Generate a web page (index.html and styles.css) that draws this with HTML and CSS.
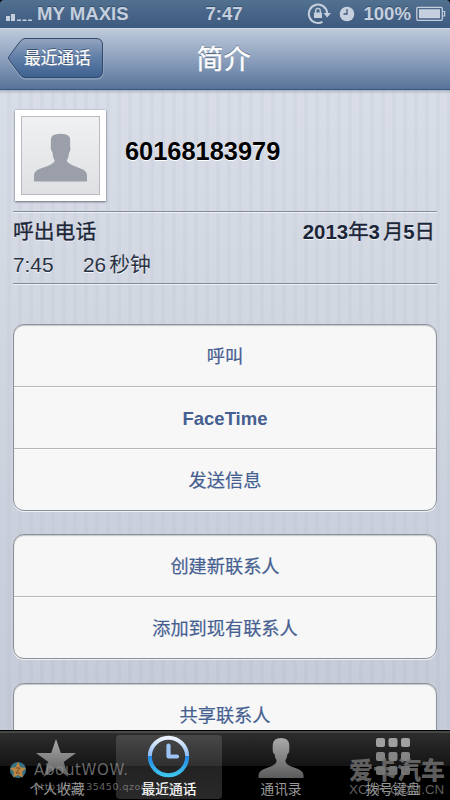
FILE: index.html
```html
<!DOCTYPE html>
<html lang="zh-CN">
<head>
<meta charset="utf-8">
<title>简介</title>
<link rel="stylesheet" href="styles.css">
</head>
<body>
<div class="phone">
  <header class="status">
    <div class="carrier">
      <svg width="28" height="10" viewBox="0 0 28 10" fill="#c5cfdd"><path d="M1 4h4v5H1zM6 2h4v7H6zM12 7.5h4V9h-4zM17.500 7.500h4V9h-4zM23 7.500h4V9h-4z"/></svg>
      <span class="carrier-name">MY MAXIS</span>
    </div>
    <span class="clock">7:47</span>
    <div class="indicators">
      <svg class="rotation" width="24" height="22" viewBox="0 0 24 22"><path d="M15.500 18.800A9.200 9.200 0 1 1 20.200 10" fill="none" stroke="#c5cfdd" stroke-width="2"/><path d="M16.500 10h7.500l-3.800 4.500zM7 9.500h8V15H7z" fill="#c5cfdd"/><path d="M8.700 10V7.700a2.300 2.300 0 0 1 4.600 0V10" fill="none" stroke="#c5cfdd" stroke-width="1.300"/></svg>
      <svg class="alarm" width="16" height="16" viewBox="0 0 16 16"><circle cx="8" cy="8" r="7.300" fill="#c5cfdd"/><path d="M8 3v5H4.500" fill="none" stroke="#3e5c80" stroke-width="1.300"/></svg>
      <span class="percent">100%</span>
      <svg width="31" height="16" viewBox="0 0 31 16"><rect x="1.800" y="1.300" width="25.500" height="13" rx="1" fill="none" stroke="#c5cfdd" stroke-width="1.300"/><path d="M4 3.300h21v9H4z" fill="#c5cfdd"/><path d="M28 5.500h1.600v4.500H28" fill="none" stroke="#c5cfdd" stroke-width="1.200"/></svg>
    </div>
  </header>
  <nav class="navbar">
    <a class="back">
      <svg class="back-shape" width="98" height="44" viewBox="0 0 98 44"><defs><linearGradient id="back" x2="0" y2="1"><stop stop-color="#94a5bf"/><stop offset=".5" stop-color="#5f7da7"/><stop offset="1" stop-color="#3d608f"/></linearGradient></defs><path d="M18 2.500H89Q96 2.500 96 9V34.500Q96 41 89 41H18Q15 41 13 38L2 23Q1 21.500 2 20L13 5.500Q15.500 2.500 18 2.500Z" fill="none" stroke="#a9bacf" stroke-opacity=".7" transform="translate(0 1)"/><path d="M18 1.500H89Q95.500 1.500 95.500 8V34Q95.500 40.500 89 40.500H18Q15 40.500 13 37.500L2 22.500Q1 21 2 19.500L13 4.500Q15.500 1.500 18 1.500Z" fill="url(#back)" stroke="#34496a"/></svg>
      <span class="back-label">最近通话</span>
    </a>
    <h1 class="title">简介</h1>
  </nav>
  <main class="content">
    <section class="contact">
      <div class="photo"><svg width="80" height="80" viewBox="0 0 80 80"><path d="M12.500 67V60Q13 56 18 54L28 50.500Q33 48 34 45.500L32.500 42L31.500 36Q29.500 35 30 29V24Q29.500 17.500 40 17.500Q51 17.500 50 25V30Q51 35 49 36.500L48 42L46.500 45.500Q47.500 48 53 50.500L62 54Q67 56 67.500 60V67Z" fill="#9b9fa9"/></svg></div>
      <strong class="number">60168183979</strong>
    </section>
    <section class="call">
      <div class="call-row"><span class="call-kind">呼出电话</span><b class="date">2013<span class="cjk">年</span>3<i class="thin"></i><span class="cjk">月</span>5<span class="cjk">日</span></b></div>
      <div class="call-row second"><span class="call-time">7:45</span><span>26<i class="thin"></i>秒钟</span></div>
    </section>
    <ul class="group">
      <li>呼叫</li>
      <li><b class="latin">FaceTime</b></li>
      <li>发送信息</li>
    </ul>
    <ul class="group">
      <li>创建新联系人</li>
      <li>添加到现有联系人</li>
    </ul>
    <ul class="group">
      <li>共享联系人</li>
    </ul>
  </main>
  <footer class="tabs">
    <a class="tab"><svg width="48" height="44" viewBox="0 0 48 44"><defs><linearGradient id="grey" x2="0" y2="1"><stop stop-color="#aaa"/><stop offset="1" stop-color="#5c5c5c"/></linearGradient></defs><path d="M23 4L27.800 18H43L30.700 27L35.400 42L23 33L10.600 42L15.300 27L3 18H18.200Z" fill="url(#grey)"/></svg><span>个人收藏</span></a>
    <a class="tab active"><svg width="48" height="44" viewBox="0 0 48 44"><defs><linearGradient id="blue" x2="0" y2="1"><stop stop-color="#edf4ff"/><stop offset=".48" stop-color="#8dbaf4"/><stop offset=".5" stop-color="#2487e6"/><stop offset="1" stop-color="#3fc4ee"/></linearGradient></defs><circle cx="23.500" cy="21.500" r="18.700" fill="none" stroke="url(#blue)" stroke-width="4"/><path d="M23.500 10.500V21.500H32" fill="none" stroke="#9dc3f5" stroke-width="4.200" stroke-linecap="round" stroke-linejoin="round"/></svg><span>最近通话</span></a>
    <a class="tab"><svg width="48" height="44" viewBox="0 0 48 44"><path d="M1.500 43V40Q2 36 7 34L15 31Q20 29 19.500 25Q18 23 17.500 19Q15.500 18 15.700 13V10Q16 3 24 3Q32 3 32.300 10V13Q32.500 18 30.500 19Q30 23 28.500 25Q28 29 33 31L41 34Q46 36 46.500 40V43Z" fill="url(#grey)"/></svg><span>通讯录</span></a>
    <a class="tab"><svg width="48" height="44" viewBox="0 0 48 44"><g fill="#a0a0a0"><rect x="7" y="3" width="9" height="9" rx="2"/><rect x="19.500" y="3" width="9" height="9" rx="2"/><rect x="32" y="3" width="9" height="9" rx="2"/></g><g fill="#858585"><rect x="7" y="17" width="9" height="9" rx="2"/><rect x="19.500" y="17" width="9" height="9" rx="2"/><rect x="32" y="17" width="9" height="9" rx="2"/></g><g fill="#707070"><rect x="7" y="31" width="9" height="9" rx="2"/><rect x="19.500" y="31" width="9" height="9" rx="2"/><rect x="32" y="31" width="9" height="9" rx="2"/></g></svg><span>拨号键盘</span></a>
    <div class="mark-left">
      <svg width="18" height="18" viewBox="0 0 18 18"><circle cx="9" cy="9" r="8" fill="#376f83"/><path d="M9 1L11.400 6.200L17 7L13 11L14 16.500L9 14L4 16.500L5 11L1 7L6.600 6.200Z" fill="#bb8743"/><path d="M7 7h4l-4 5h4" fill="none" stroke="#7a4b2c"/></svg>
      <span class="mark-name">AboutWOW.</span>
      <span class="mark-url">http://17135450.qzone.com</span>
    </div>
    <div class="mark-right"><span class="mark-brand">爱卡汽车</span><span class="mark-domain">XCAR.COM.CN</span></div>
  </footer>
</div>
</body>
</html>
```
FILE: styles.css
```css
* { box-sizing: border-box; }
body { margin: 0; background: #000; font-family: "Liberation Sans", "Noto Sans CJK SC", sans-serif; }
svg { display: block; flex: none; }
.phone { width: 450px; height: 800px; overflow: hidden; display: flex; flex-direction: column; border-radius: 4px 4px 0 0; }

.status { height: 28px; flex: none; display: grid; grid-template-columns: 1fr auto 1fr; align-items: center; padding: 0 4px 0 5px; background: linear-gradient(#52708f, #3d5a80); color: #c5cfdd; font-weight: bold; font-size: 18.600px; line-height: 28px; text-shadow: 0 -1px 0 #34506f; }
.carrier { display: flex; align-items: center; gap: 4px; }
.carrier svg { margin-top: 6px; }
.clock { margin-right: 3px; }
.indicators { display: flex; align-items: center; justify-content: flex-end; }
.rotation { margin-right: 8px; }
.alarm { margin-right: 8px; }
.percent { margin-right: 4px; }

.navbar { position: relative; height: 62px; flex: none; display: flex; align-items: center; justify-content: center; background: linear-gradient(#bdcadb, #8ca0bd 50%, #58749a); border-top: 1px solid #d0dae6; border-bottom: 1px solid #385480; }
.back { position: absolute; left: 7px; top: 8px; width: 98px; height: 44px; }
.back-shape { position: absolute; left: 0; top: 0; }
.back-label { position: absolute; left: 17px; top: 1px; line-height: 41px; font-size: 16.700px; color: #fff; white-space: nowrap; -webkit-text-stroke: .2px #fff; text-shadow: 0 -1px 0 #3c4f6c; }
.title { margin: 2px 3px 0 0; font-size: 27px; line-height: 58px; font-weight: 400; color: #fff; -webkit-text-stroke: .4px #fff; text-shadow: 0 -1px 0 #4c5d77; }

.content { flex: 1; min-height: 0; overflow: hidden; padding: 20px 13px 0; background: repeating-linear-gradient(90deg, rgba(100,120,150,0) 0 7px, rgba(100,120,150,.045) 7px 11px), linear-gradient(#aeb6c4, rgba(174,182,196,0) 4px), linear-gradient(#d8dde7, #c5cbd7); }
.contact { display: flex; height: 101px; }
.photo { width: 91px; height: 91px; margin-left: 2px; padding: 6px; background: #fff; box-shadow: 0 1px 2px rgba(60,65,80,.65), 0 0 1px #8b91a0; }
.photo svg { width: 79px; height: 79px; border: 1px solid #b9bbc0; background: linear-gradient(#f0f1f2, #dfe0e3); }
.number { margin-left: 19px; line-height: 83px; font-size: 25.400px; color: #000; text-shadow: 0 1px 0 #fff; }
.call { height: 73px; border-top: 1px solid #858a95; border-bottom: 1px solid #858a95; box-shadow: inset 0 1px 0 #eef1f6, 0 1px 0 #eef1f6; color: #1b2538; font-size: 20.800px; text-shadow: 0 1px 0 #f4f6fa; }
.call-row { display: flex; justify-content: space-between; height: 33px; line-height: 40px; }
.second { justify-content: flex-start; color: #2a3344; }
.call-kind { -webkit-text-stroke: .3px #1b2538; }
.call-time { width: 70px; }
.date { margin-right: 2px; font-size: 20.400px; }
.cjk { font-weight: 400; -webkit-text-stroke: .4px #1b2538; }
.thin { display: inline-block; width: 3px; }

.group { list-style: none; margin: 23px 0 0; padding: 0; border: 1px solid #8c9098; border-radius: 11px; background: #f7f7f7; box-shadow: 0 1px 0 #eef1f6, inset 0 1px 1px #c5c7cb; color: #465f91; font-size: 18.200px; text-align: center; -webkit-text-stroke: .2px #465f91; }
.call + .group { margin-top: 40px; }
.group li { height: 61px; line-height: 65px; }
.group li + li { height: 62px; border-top: 1px solid #b5b6b8; box-shadow: inset 0 1px 0 #fff; }
.group:last-child { margin-top: 24px; }
.latin { font-size: 18.500px; -webkit-text-stroke: 0; position: relative; top: -1px; }

.tabs { position: relative; height: 70px; flex: none; display: grid; grid-template-columns: repeat(4, 1fr); padding: 4px 1px 3px; border-top: 1px solid #000; background: linear-gradient(#454845 0 2px, #2d2d2d 2px, #141414 35px, #000 35px); }
.tab { display: flex; flex-direction: column; align-items: center; color: #999; font-size: 13.700px; line-height: 18px; border-radius: 4px; margin: 0 3px; }
.tab svg { margin-bottom: 2px; }
.active { color: #fff; background: linear-gradient(#484848, #303030 31px, #222 31px, #292929); -webkit-text-stroke: .2px #fff; }
.mark-left { position: absolute; left: 9px; top: 30px; color: rgba(145,145,145,.72); font-family: "DejaVu Sans", sans-serif; display: grid; grid-template-columns: 18px auto; column-gap: 7px; align-items: center; }
.mark-name { font-size: 15px; line-height: 18px; letter-spacing: .65px; }
.mark-url { grid-column: 2; font-size: 9.500px; line-height: 15px; letter-spacing: .5px; }
.mark-right { position: absolute; right: 5px; top: 27px; width: 96px; display: flex; flex-direction: column; color: rgba(120,120,120,.8); }
.mark-brand { font-size: 24px; line-height: 25px; font-weight: 900; white-space: nowrap; }
.mark-domain { font-size: 13.400px; line-height: 14px; white-space: nowrap; }
```
